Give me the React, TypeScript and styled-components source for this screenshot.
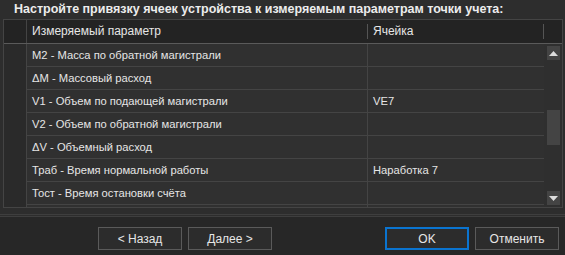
import styled, { createGlobalStyle } from "styled-components";

const Details = {
    Title: "Настройте привязку ячеек устройства к измеряемым параметрам точки учета:",
    Columns: ["Измеряемый параметр", "Ячейка"],
    Rows: [
        { Name: "M2 - Масса по обратной магистрали", Cell: "" },
        { Name: "ΔM - Массовый расход", Cell: "" },
        { Name: "V1 - Объем по подающей магистрали", Cell: "VE7" },
        { Name: "V2 - Объем по обратной магистрали", Cell: "" },
        { Name: "ΔV - Объемный расход", Cell: "" },
        { Name: "Траб - Время нормальной работы", Cell: "Наработка 7" },
        { Name: "Тост - Время остановки счёта", Cell: "" },
        { Name: "", Cell: "" },
    ],
}

const GlobalStyle = createGlobalStyle`
    html, body {
        margin: 0;
        padding: 0;
        background: #2d2d2d;
    }
    * {
        box-sizing: border-box;
    }
`

const Window = styled.div`
    width: 565px;
    height: 255px;
    display: flex;
    flex-direction: column;
    background: #2d2d2d;
    color: #e6e6e6;
    font-family: "Liberation Sans", Arial, sans-serif;
    font-size: 12px;
    overflow: hidden;
`

const Title = styled.h1`
    margin: 0;
    height: 19px;
    padding-left: 14px;
    font-size: 12.5px;
    line-height: 19px;
    font-weight: bold;
    color: #ececec;
`

const Frame = styled.div`
    margin-left: 3px;
    width: 560px;
    height: 189px;
    border: 1px solid #444;
    display: flex;
    flex-direction: column;
    overflow: hidden;
    background: #2a2a2a;
`

const HeaderRow = styled.div`
    display: flex;
    height: 24px;
    flex-shrink: 0;
    background: #232323;
    border-bottom: 1px solid #5a5a5a;
`

const Corner = styled.div`
    width: 23px;
    border-right: 1px solid #444;
`

const HeaderCell = styled.div<{ $width: number }>`
    position: relative;
    width: ${(p) => p.$width}px;
    padding-left: 5px;
    line-height: 23px;
    color: #e6e6e6;

    &::after {
        content: "";
        position: absolute;
        right: 0;
        top: 4px;
        bottom: 4px;
        width: 1px;
        background: #555;
    }
`

const Body = styled.div`
    display: flex;
    flex: 1;
    min-height: 0;
`

const RowHeaders = styled.div`
    width: 23px;
    border-right: 1px solid #444;
    background: #2a2a2a;
`

const Rows = styled.div`
    width: 517px;
    display: flex;
    flex-direction: column;
    background: #303030;
`

const Row = styled.div`
    display: flex;
    height: 23px;
    flex-shrink: 0;
    border-bottom: 1px solid #444;
`

const Cell = styled.div<{ $width: number }>`
    width: ${(p) => p.$width}px;
    padding-left: 5px;
    font-size: 11.2px;
    line-height: 22px;
    white-space: nowrap;
    overflow: hidden;
    border-right: 1px solid #444;

    &:last-child {
        border-right: none;
    }
`

const Scrollbar = styled.div`
    width: 18px;
    display: flex;
    flex-direction: column;
    align-items: center;
    padding: 2px 0 2px;
    background: #2f2f2f;
`

const ScrollButton = styled.div`
    width: 13px;
    height: 14px;
    background: #444;
    display: flex;
    align-items: center;
    justify-content: center;
`

const Track = styled.div`
    flex: 1;
    width: 13px;
    display: flex;
    flex-direction: column;
    padding-top: 50px;
`

const Thumb = styled.div`
    height: 35px;
    background: #444;
`

const Divider = styled.div`
    margin-top: 6px;
    height: 3px;
    border-top: 1px solid #3e3e3e;
    border-bottom: 1px solid #3e3e3e;
`

const Footer = styled.div`
    flex: 1;
    display: flex;
    justify-content: space-between;
    padding: 10px 6px 0 98px;
    background: #272727;
`

const ButtonGroup = styled.div`
    display: flex;
    gap: 6px;
`

const Button = styled.button<{ $primary?: boolean }>`
    width: 84px;
    height: 23px;
    background: #2c2c2c;
    color: #e6e6e6;
    font-family: "Liberation Sans", Arial, sans-serif;
    font-size: 12px;
    border: ${(p) => (p.$primary ? "2px solid #0a74d0" : "1px solid #5a5a5a")};
    padding: 0;
`

function Arrow({ down }: { down?: boolean }) {
    return (
        <svg width="9" height="5" viewBox="0 0 9 5">
            <polygon points={down ? "0,0 9,0 4.5,5" : "4.5,0 9,5 0,5"} fill="#ddd" />
        </svg>
    );
}

export default function App() {
    return (
        <Window>
            <GlobalStyle />
            <Title>{Details.Title}</Title>
            <Frame>
                <HeaderRow>
                    <Corner />
                    <HeaderCell $width={341}>{Details.Columns[0]}</HeaderCell>
                    <HeaderCell $width={176}>{Details.Columns[1]}</HeaderCell>
                </HeaderRow>
                <Body>
                    <RowHeaders />
                    <Rows>
                        {Details.Rows.map((row, index) => (
                            <Row key={index}>
                                <Cell $width={341}>{row.Name}</Cell>
                                <Cell $width={176}>{row.Cell}</Cell>
                            </Row>
                        ))}
                    </Rows>
                    <Scrollbar>
                        <ScrollButton>
                            <Arrow />
                        </ScrollButton>
                        <Track>
                            <Thumb />
                        </Track>
                        <ScrollButton>
                            <Arrow down />
                        </ScrollButton>
                    </Scrollbar>
                </Body>
            </Frame>
            <Divider />
            <Footer>
                <ButtonGroup>
                    <Button>&lt; Назад</Button>
                    <Button>Далее &gt;</Button>
                </ButtonGroup>
                <ButtonGroup>
                    <Button $primary>OK</Button>
                    <Button>Отменить</Button>
                </ButtonGroup>
            </Footer>
        </Window>
    );
}
